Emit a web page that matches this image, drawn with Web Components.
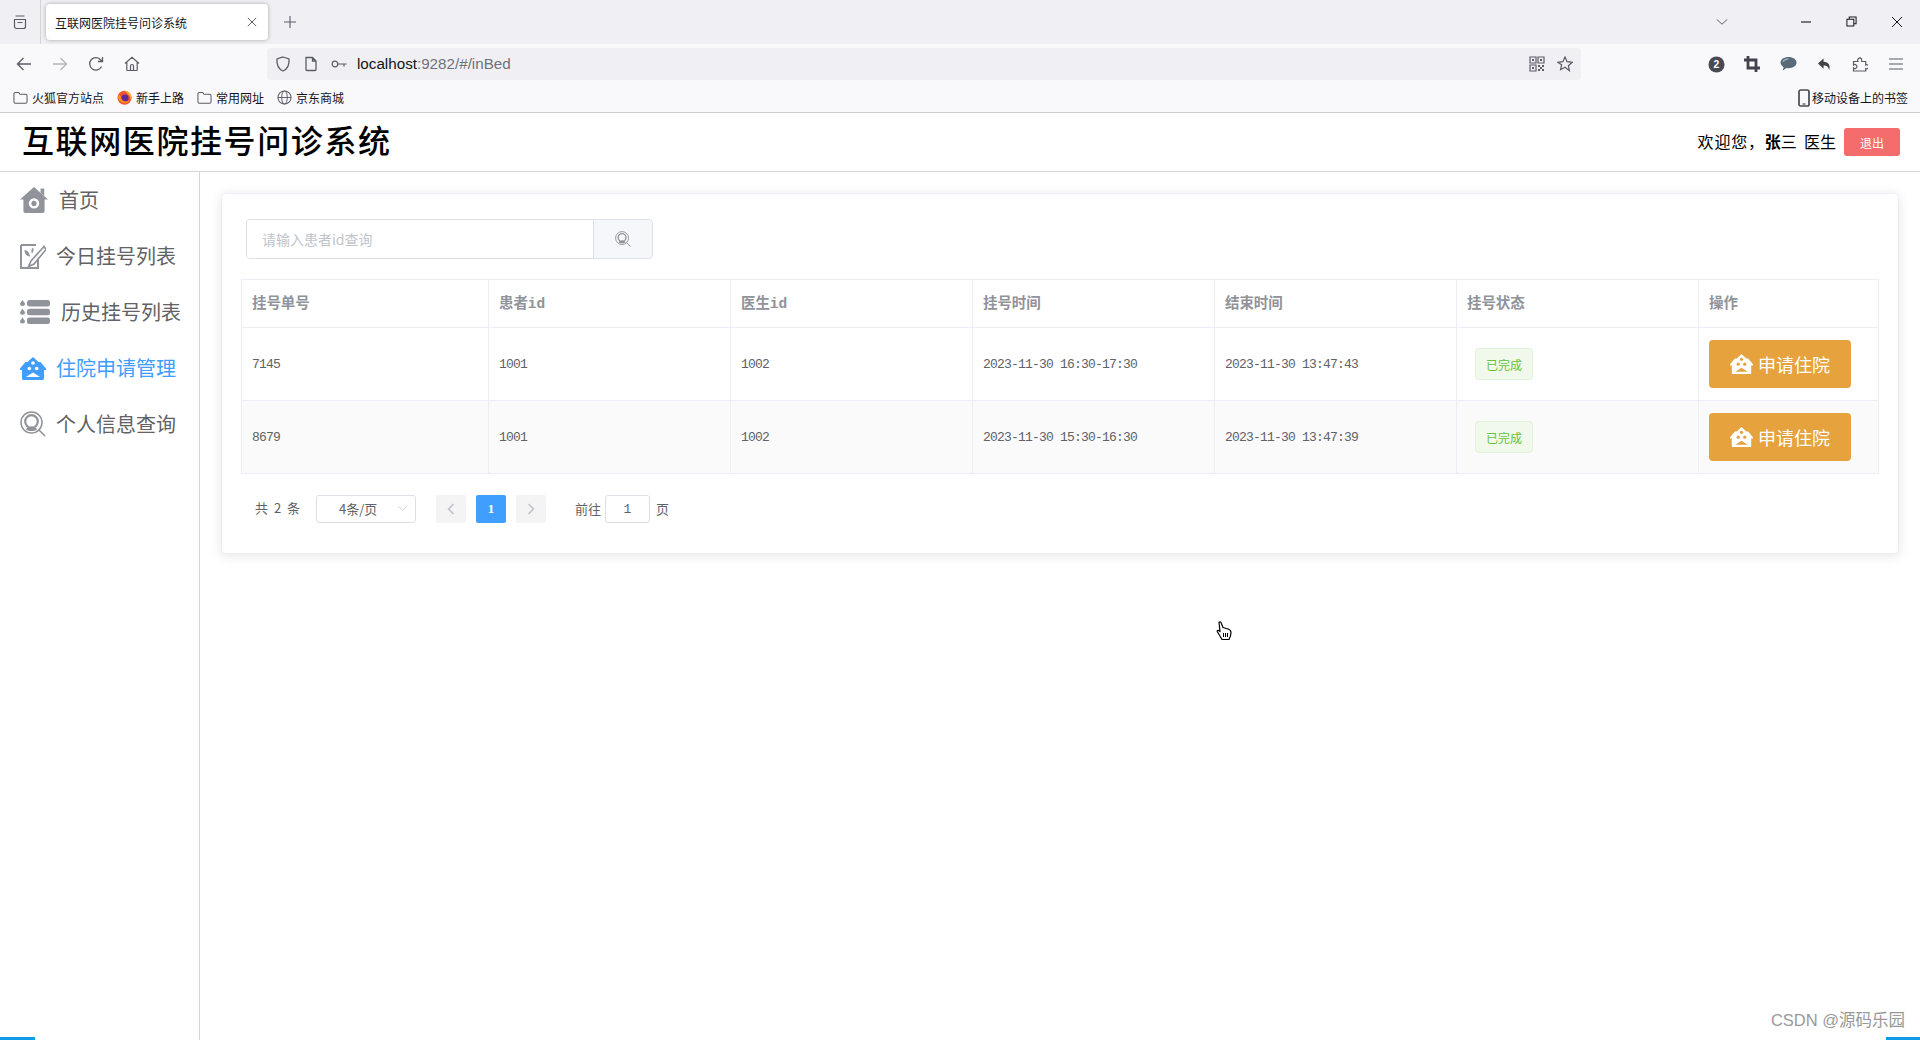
<!DOCTYPE html>
<html lang="zh">
<head>
<meta charset="utf-8">
<title>互联网医院挂号问诊系统</title>
<style>
  html, body { margin: 0; height: 100%; background: #fff; }
  body { font-family: "Noto Sans CJK SC", sans-serif; overflow: hidden; }
  #page { display: flex; flex-direction: column; height: 1040px; position: relative; }
  #main { display: flex; flex: 1; min-height: 0; }
</style>
</head>
<body>
<div id="page">
  <browser-frame url-host="localhost" url-rest=":9282/#/inBed" tab-title="互联网医院挂号问诊系统"></browser-frame>
  <app-header title-text="互联网医院挂号问诊系统"></app-header>
  <div id="main">
    <side-menu>
      <menu-item icon="home" gap="11">首页</menu-item>
      <menu-item icon="note" gap="10">今日挂号列表</menu-item>
      <menu-item icon="list" gap="11">历史挂号列表</menu-item>
      <menu-item icon="bed" gap="10" active>住院申请管理</menu-item>
      <menu-item icon="search" gap="10">个人信息查询</menu-item>
    </side-menu>
    <content-area>
      <panel-card>
        <search-box placeholder="请输入患者id查询"></search-box>
        <register-table></register-table>
        <page-bar></page-bar>
      </panel-card>
    </content-area>
  </div>
  <screen-overlay></screen-overlay>
</div>

<script>
const ICONS = {
  home: ['0 0 28 26', `<path d="M14 0 28 12.6h-3.4V24a2 2 0 0 1-2 2H5.4a2 2 0 0 1-2-2V12.6H0L14 0Z"/><path d="M20.6 1.5h3.6v7.4l-3.6-3.2Z"/><circle cx="14" cy="16.4" r="5.2" fill="#fff"/><circle cx="14" cy="16.4" r="2.6"/>`],
  note: ['0 0 26 26', `<path d="M1 2h15M1 2v23h17V15" fill="none" stroke="currentColor" stroke-width="2"/><path d="M24 3.5 11 18l-2.5 5.5L14 21 26 6.5Z" fill="#fff" stroke="currentColor" stroke-width="1.7"/><path d="M4.5 7c3 .5 5 2.500 5.500 6.500-3.500-.5-5.500-2.500-5.500-6.500ZM13 4.500c1 2 .5 4-1 6-1-2-1-4 1-6Z"/>`],
  list: ['0 0 30 24', `<rect x="7" y="0" width="23" height="6.500" rx="2.500"/><rect x="7" y="8.700" width="23" height="6.500" rx="2.500"/><rect x="7" y="17.400" width="23" height="6.500" rx="2.500"/><path d="M2.500 0 5 3.500a2.500 2.500 0 1 1-5 0ZM2.500 8.700 5 12.200a2.500 2.500 0 1 1-5 0ZM2.500 17.400 5 20.900a2.500 2.500 0 1 1-5 0Z"/>`],
  bed: ['0 0 26 23', `<path d="M13 0 18.500 5H20.500L26 11.500V13H24V21.500a1.500 1.500 0 0 1-1.500 1.500H3.500A1.500 1.500 0 0 1 2 21.500V13H0V11.500L5.500 5H7.500Z"/><circle cx="13" cy="6" r="1.800" fill="var(--hole,#fff)"/><circle cx="9.300" cy="11.500" r="1.800" fill="var(--hole,#fff)"/><circle cx="16.700" cy="11.500" r="1.800" fill="var(--hole,#fff)"/><path d="M13 15.500 20 20H6Z" fill="var(--hole,#fff)"/>`],
  search: ['0 0 26 26', `<circle cx="11.500" cy="11.500" r="10.500" fill="none" stroke="currentColor" stroke-width="1.500"/><circle cx="11.500" cy="10.500" r="6.300" fill="none" stroke="currentColor" stroke-width="2.200"/><path d="M6 18.500c1-2.200 3-3 5.500-3s4.500.8 5.500 3c-3 2-8 2-11 0Z"/><path d="m18.500 18.500 6.500 6.500" stroke="currentColor" stroke-width="1.600" fill="none"/>`],
  tabs: ['0 0 16 16', `<path d="M2.500 5.500h11v7a2 2 0 0 1-2 2h-7a2 2 0 0 1-2-2ZM3.500 2h9M5.500 8.500h5" fill="none" stroke="currentColor" stroke-width="1.200"/>`],
  back: ['0 0 16 16', `<path d="M15 8H1.500M7.500 2 1.500 8l6 6" fill="none" stroke="currentColor" stroke-width="1.300"/>`],
  forward: ['0 0 16 16', `<path d="M1 8h13.500M8.500 2l6 6-6 6" fill="none" stroke="currentColor" stroke-width="1.300"/>`],
  reload: ['0 0 16 16', `<path d="M13.500 10.500A6.200 6.200 0 1 1 12.800 4l1 1.200M14.500 1v4.500H10" fill="none" stroke="currentColor" stroke-width="1.300"/>`],
  house: ['0 0 16 16', `<path d="M1 7.500 8 1.200l7 6.300M2.800 6v7.500a1 1 0 0 0 1 1h8.400a1 1 0 0 0 1-1V6M6.500 14.500V10a1.500 1.500 0 0 1 3 0v4.500" fill="none" stroke="currentColor" stroke-width="1.200"/>`],
  shield: ['0 0 16 16', `<path d="M8 1 14 3c.5 6-1.500 10-6 12C3.500 13 1.500 9 2 3Z" fill="none" stroke="currentColor" stroke-width="1.300"/>`],
  page: ['0 0 16 16', `<path d="M3 1.500h6.500l3.500 3.500v8.500a1 1 0 0 1-1 1H4a1 1 0 0 1-1-1ZM9.500 1.500V5H13" fill="none" stroke="currentColor" stroke-width="1.300"/>`],
  key: ['0 0 16 16', `<circle cx="4" cy="8" r="2.800" fill="none" stroke="currentColor" stroke-width="1.200"/><path d="M6.800 8H15.500M13 8v2.500" fill="none" stroke="currentColor" stroke-width="1.200"/>`],
  qr: ['0 0 16 16', `<path d="M1 1h6v6H1ZM9 1h6v6H9ZM1 9h6v6H1Z" fill="none" stroke="currentColor" stroke-width="1.200"/><path d="M3 3h2v2H3ZM11 3h2v2h-2ZM3 11h2v2H3ZM9 9h2v2H9ZM13 9h2v2h-2ZM11 11h2v2h-2ZM9 13h2v2H9ZM13 13h2v2h-2Z"/>`],
  star: ['0 0 16 16', `<path d="m8 1 2.100 4.700 5.100.6-3.800 3.400 1 5L8 11.300l-4.400 2.400 1-5L.8 6.300l5.100-.6Z" fill="none" stroke="currentColor" stroke-width="1.200"/>`],
  badge: ['0 0 18 18', `<circle cx="9" cy="9" r="8.500"/><text x="9" y="13" text-anchor="middle" font-size="11" font-weight="700" fill="#fff" font-family="Liberation Sans">2</text>`],
  crop: ['0 0 16 16', `<path d="M4 0v12h12M0 4h12v12" fill="none" stroke="currentColor" stroke-width="2.800"/>`],
  chat: ['0 0 18 16', `<path d="M9 1c4.700 0 8.500 2.500 8.500 6S13.700 13 9 13c-.8 0-1.500-.1-2.200-.2L3 15.500l.8-3.700C2 10.700.5 9 .5 7 .5 3.500 4.300 1 9 1Z"/><path d="M3 6c1.500-2 4-3 6-3" stroke="#9fb3c4" stroke-width="1.400" fill="none"/>`],
  undo: ['0 0 16 16', `<path d="M7 1.500 1 7l6 5.500V9c3 0 5 .7 6 5 1.500-5-.5-9-6-9Z"/>`],
  puzzle: ['0 0 16 16', `<path d="M1.500 5.500H6a2 2 0 1 1 3.500-2.500l.2 2.500h4v3.500a2 2 0 1 1 0 3.500v2.500H1.500V12a2 2 0 1 0 0-3Z" fill="none" stroke="currentColor" stroke-width="1.200"/>`],
  menu: ['0 0 16 16', `<path d="M1 3h14M1 8h14M1 13h14" fill="none" stroke="currentColor" stroke-width="1.200"/>`],
  chevron: ['0 0 16 16', `<path d="m2 5 6 5.500L14 5" fill="none" stroke="currentColor" stroke-width="1.100"/>`],
  minimize: ['0 0 12 12', `<path d="M1 6h10" stroke="currentColor" stroke-width="1.100"/>`],
  restore: ['0 0 12 12', `<path d="M1 3.500h7.500V11H1ZM3.500 3.500V1H11v7.500H8.500" fill="none" stroke="currentColor" stroke-width="1.100"/>`],
  close: ['0 0 12 12', `<path d="m1 1 10 10M11 1 1 11" stroke="currentColor" stroke-width="1"/>`],
  plus: ['0 0 12 12', `<path d="M6 0v12M0 6h12" stroke="currentColor" stroke-width="1.100"/>`],
  folder: ['0 0 16 14', `<path d="M1 3a1.500 1.500 0 0 1 1.500-1.500H6l1.500 2h6A1.500 1.500 0 0 1 15 5v6.500a1.500 1.500 0 0 1-1.500 1.500h-11A1.500 1.500 0 0 1 1 11.500Z" fill="none" stroke="currentColor" stroke-width="1.100"/>`],
  globe: ['0 0 16 16', `<circle cx="8" cy="8" r="7" fill="none" stroke="currentColor" stroke-width="1.100"/><ellipse cx="8" cy="8" rx="3" ry="7" fill="none" stroke="currentColor" stroke-width="1"/><path d="M1 8h14" stroke="currentColor"/>`],
  firefox: ['0 0 16 16', `<circle cx="8" cy="8.300" r="7.500" fill="#f0522f"/><path d="M8 .800c5 .5 7.500 4 7.500 7.500 0 1-.2 2-.6 2.800C14.500 6 11 3.500 8 .800Z" fill="#ffb52b"/><circle cx="8.500" cy="8.500" r="3.800" fill="#5b2a9e"/><path d="M.8 7c.8 5 4 7 7.200 7 3 0 5-1.500 6-4-1.500 2-4 2.500-6 2-2.500-.6-4-2.600-3.800-5L2.500 5Z" fill="#ff8a1f"/>`],
  phone: ['0 0 12 18', `<rect x="1" y="1" width="10" height="16" rx="1.800" fill="none" stroke="currentColor" stroke-width="1.700"/><path d="M4.500 15h3" stroke="currentColor" stroke-width="1.200"/>`],
  chevLeft: ['0 0 10 10', `<path d="M7 1 3 5l4 4" fill="none" stroke="currentColor" stroke-width="1.400"/>`],
  chevRight: ['0 0 10 10', `<path d="m3 1 4 4-4 4" fill="none" stroke="currentColor" stroke-width="1.400"/>`]
};

function iconSvg(name, size, color) {
  const [box, body] = ICONS[name];
  const [, , w, h] = box.split(' ').map(Number);
  const height = Math.round(size * h / w * 10) / 10;
  return `<svg xmlns="http://www.w3.org/2000/svg" viewBox="${box}" width="${size}" height="${height}" fill="${color}" style="color:${color};display:block;flex:none">${body}</svg>`;
}

class BrowserFrame extends HTMLElement {
  constructor() {
    super();
    this.attachShadow({ mode: 'open' });
  }
  connectedCallback() {
    const mark = n => iconSvg(n, 16, '#5b5b66');
    const btn = (n, s, c = '#5b5b66') => `<span class="btn">${iconSvg(n, s, c)}</span>`;
    this.shadowRoot.innerHTML = `
      <style>
        :host { display: block; font-family: "Noto Sans CJK SC", sans-serif; color: #15141a; flex: none; }
        .strip { height: 44px; background: #f0f0f4; display: flex; align-items: center; }
        .btn { width: 36px; display: flex; justify-content: center; align-items: center; flex: none; }
        .side { width: 41px; display: flex; justify-content: center; border-right: 1px solid #d4d4d8; height: 44px; align-items: center; box-sizing: border-box; margin-right: 5px; }
        .tab { width: 222px; height: 36px; background: #fff; border-radius: 4px; box-shadow: 0 0 4px rgba(0,0,0,.3); display: flex; align-items: center; padding: 0 11px 0 9px; box-sizing: border-box; font-size: 12px; justify-content: space-between; }
        .plus { margin-left: 16px; }
        .fill { flex: 1; }
        .winbtns { display: flex; gap: 34px; margin-right: 17px; }
        .chev { margin-right: 71px; }
        .nav { height: 40px; background: #f9f9fb; display: flex; align-items: center; padding-left: 6px; }
        .url { width: 1314px; height: 32px; margin-left: 117px; border-radius: 4px; background: #f0f0f4; display: flex; align-items: center; box-sizing: border-box; padding: 0 2px 0 2px; font-size: 15.2px; flex: none; }
        .url .ic { display: flex; width: 28px; justify-content: center; margin-right: 0; }
        .addr { margin-left: 4px; flex: 1; font-family: "Liberation Sans", sans-serif; color: #15141a; padding-bottom: 1px; }
        .addr span { color: #70707a; }
        .tools { display: flex; margin-left: 117px; }
        .marks { height: 27px; padding-bottom: 1px; background: #f9f9fb; display: flex; align-items: center; font-size: 12px; padding-left: 13px; border-bottom: 1px solid #ccc; }
        .mark { display: flex; align-items: center; gap: 4px; margin-right: 13px; letter-spacing: 0; }
        .fill2 { flex: 1; }
        .mobile { display: flex; align-items: center; gap: 2px; margin-right: 12px; }
      </style>
      <div class="strip">
        <div class="side">${iconSvg('tabs', 16, '#5b5b66')}</div>
        <div class="tab"><span>${this.getAttribute('tab-title')}</span>${iconSvg('close', 10, '#3b3b45')}</div>
        <div class="plus">${iconSvg('plus', 12, '#5b5b66')}</div>
        <div class="fill"></div>
        <div class="chev">${iconSvg('chevron', 14, '#5b5b66')}</div>
        <div class="winbtns">${iconSvg('minimize', 12, '#15141a')}${iconSvg('restore', 11, '#15141a')}${iconSvg('close', 12, '#15141a')}</div>
      </div>
      <div class="nav">
        ${btn('back', 16)}${btn('forward', 16, '#b4b4ba')}${btn('reload', 16)}${btn('house', 16)}
        <div class="url">
          <span class="ic">${mark('shield')}</span><span class="ic">${mark('page')}</span><span class="ic">${mark('key')}</span>
          <div class="addr">${this.getAttribute('url-host')}<span>${this.getAttribute('url-rest')}</span></div>
          <span class="ic">${mark('qr')}</span><span class="ic">${mark('star')}</span>
        </div>
        <div class="tools">${btn('badge', 17, '#4a4a55')}${btn('crop', 16, '#42424c')}${btn('chat', 17, '#5a6a78')}${btn('undo', 15, '#42424c')}${btn('puzzle', 16)}${btn('menu', 16)}</div>
      </div>
      <div class="marks">
        <span class="mark">${iconSvg('folder', 15, '#5b5b66')}火狐官方站点</span>
        <span class="mark">${iconSvg('firefox', 15, '#000')}新手上路</span>
        <span class="mark">${iconSvg('folder', 15, '#5b5b66')}常用网址</span>
        <span class="mark">${iconSvg('globe', 15, '#5b5b66')}京东商城</span>
        <span class="fill2"></span>
        <span class="mobile">${iconSvg('phone', 12, '#4a4a55')}移动设备上的书签</span>
      </div>`;
  }
}

class AppHeader extends HTMLElement {
  constructor() {
    super();
    this.attachShadow({ mode: 'open' });
  }
  connectedCallback() {
    this.shadowRoot.innerHTML = `
      <style>
        :host { display: flex; flex: none; height: 59px; box-sizing: border-box; border-bottom: 1px solid #d5d5d5; align-items: center; justify-content: space-between; padding: 0 20px 0 22px; font-family: "Noto Sans CJK SC", sans-serif; color: #000; }
        h1 { margin: 0 0 6px; font-size: 32px; letter-spacing: 1.6px; font-weight: 500; line-height: 1; }
        .user { display: flex; align-items: center; font-size: 16px; }
        .who { margin-right: 8px; white-space: pre; padding-bottom: 3px; }
        .hi { letter-spacing: .8px; }
        button { width: 56px; height: 28px; border: 0; border-radius: 3px; background: #f56c6c; color: #fff; font: 12px "Noto Sans CJK SC", sans-serif; padding: 0; }
      </style>
      <h1>${this.getAttribute('title-text')}</h1>
      <div class="user"><span class="who"><span class="hi">欢迎您，</span><b>张</b>三  医生</span><button>退出</button></div>`;
  }
}

class SideMenu extends HTMLElement {
  constructor() {
    super();
    this.attachShadow({ mode: 'open' }).innerHTML = `
      <style>
        :host { display: flex; flex-direction: column; width: 200px; flex: none; box-sizing: border-box; border-right: 1px solid #d5d5d5; }
      </style>
      <slot></slot>`;
  }
}

class MenuItem extends HTMLElement {
  constructor() {
    super();
    this.attachShadow({ mode: 'open' });
  }
  connectedCallback() {
    const active = this.hasAttribute('active');
    const color = active ? '#409eff' : '#909399';
    const width = { home: 28, note: 26, list: 30, bed: 26, search: 26 }[this.getAttribute('icon')];
    this.shadowRoot.innerHTML = `
      <style>
        :host { display: flex; height: 56px; align-items: center; padding-left: 20px; flex: none; font-size: 20px; color: ${active ? '#409eff' : '#606266'}; --hole: #fff; }
        .icon { margin-right: ${this.getAttribute('gap')}px; }
        .label { padding-bottom: 1px; }
      </style>
      <span class="icon">${iconSvg(this.getAttribute('icon'), width, color)}</span><span class="label"><slot></slot></span>`;
  }
}

class ContentArea extends HTMLElement {
  constructor() {
    super();
    this.attachShadow({ mode: 'open' }).innerHTML = `
      <style>
        :host { display: block; flex: 1; min-width: 0; padding: 21px 21px 0 21px; }
      </style>
      <slot></slot>`;
  }
}

class PanelCard extends HTMLElement {
  constructor() {
    super();
    this.attachShadow({ mode: 'open' }).innerHTML = `
      <style>
        :host { display: block; box-sizing: border-box; height: 361px; padding: 25px 19px 0; border: 1px solid #ebeef5; border-radius: 4px; box-shadow: 0 2px 12px rgba(0,0,0,.1); background: #fff; }
      </style>
      <slot></slot>`;
  }
}

class SearchBox extends HTMLElement {
  constructor() {
    super();
    this.attachShadow({ mode: 'open' });
  }
  connectedCallback() {
    this.shadowRoot.innerHTML = `
      <style>
        :host { display: flex; width: 407px; height: 40px; margin-left: 5px; box-sizing: border-box; border: 1px solid #dcdfe6; border-radius: 4px; overflow: hidden; }
        input { flex: 1; min-width: 0; border: 0; outline: 0; padding: 0 15px; font: 14px "Noto Sans CJK SC", sans-serif; color: #606266; }
        input::placeholder { color: #c0c4cc; opacity: 1; }
        .go { width: 58px; flex: none; background: #f5f7fa; border-left: 1px solid #dcdfe6; display: flex; align-items: center; justify-content: center; }
      </style>
      <input placeholder="${this.getAttribute('placeholder')}">
      <div class="go">${iconSvg('search', 16, '#909399')}</div>`;
  }
}

class StatusTag extends HTMLElement {
  constructor() {
    super();
    this.attachShadow({ mode: 'open' }).innerHTML = `
      <style>
        :host { display: flex; align-items: center; justify-content: center; width: 58px; height: 32px; box-sizing: border-box; border: 1px solid #e1f3d8; border-radius: 4px; background: #f0f9eb; color: #67c23a; font: 12px "Noto Sans CJK SC", sans-serif; letter-spacing: 0; margin-left: 8px; }
      </style>
      <slot></slot>`;
  }
}

class ApplyButton extends HTMLElement {
  constructor() {
    super();
    this.attachShadow({ mode: 'open' }).innerHTML = `
      <style>
        :host { display: flex; align-items: center; justify-content: center; gap: 5px; width: 142px; height: 48px; background: #e6a23c; color: #fff; border-radius: 4px; font: 18px "Noto Sans CJK SC", sans-serif; letter-spacing: 0; --hole: #e6a23c; }
      </style>
      ${iconSvg('bed', 23, '#fff')}<slot></slot>`;
  }
}

class RegisterTable extends HTMLElement {
  constructor() {
    super();
    this.attachShadow({ mode: 'open' });
    this.rows = [
      ['7145', '1001', '1002', '2023-11-30 16:30-17:30', '2023-11-30 13:47:43'],
      ['8679', '1001', '1002', '2023-11-30 15:30-16:30', '2023-11-30 13:47:39']
    ];
  }
  connectedCallback() {
    const heads = ['挂号单号', '患者id', '医生id', '挂号时间', '结束时间', '挂号状态', '操作'];
    const body = this.rows.map(r => `
      <tr>${r.map(v => `<td>${v}</td>`).join('')}
        <td><status-tag>已完成</status-tag></td>
        <td><apply-button>申请住院</apply-button></td>
      </tr>`).join('');
    this.shadowRoot.innerHTML = `
      <style>
        :host { display: block; margin-top: 20px; }
        table { width: 1637px; table-layout: fixed; border-collapse: collapse; font-family: "Liberation Mono", "Noto Sans CJK SC", monospace; }
        th, td { border: 1px solid #ebeef5; padding: 0 0 0 10px; text-align: left; }
        th { height: 48px; padding-bottom: 4px; box-sizing: border-box; font-size: 14.5px; color: #909399; font-weight: 700; letter-spacing: -.1px; }
        td { height: 72px; font-size: 13px; color: #606266; letter-spacing: -.8px; }
        tr:nth-child(2) td { background: #fafafa; }
      </style>
      <table>
        <colgroup><col style="width:247px"><col style="width:242px"><col style="width:242px"><col style="width:242px"><col style="width:242px"><col style="width:242px"><col style="width:180px"></colgroup>
        <thead><tr>${heads.map(h => `<th>${h}</th>`).join('')}</tr></thead>
        <tbody>${body}</tbody>
      </table>`;
  }
}

class PageBar extends HTMLElement {
  constructor() {
    super();
    this.attachShadow({ mode: 'open' });
  }
  connectedCallback() {
    this.shadowRoot.innerHTML = `
      <style>
        :host { display: flex; align-items: center; height: 28px; margin-top: 21px; padding-left: 14px; font: 13px "Noto Sans CJK SC", sans-serif; color: #606266; }
        .total { width: 61px; word-spacing: 3px; white-space: pre; padding-bottom: 3px; }
        .size { width: 100px; height: 28px; box-sizing: border-box; border: 1px solid #dcdfe6; border-radius: 3px; display: flex; align-items: center; padding: 0 7px 1px 22px; justify-content: space-between; font-size: 13px; margin-right: 20px; }
        .pg { width: 30px; height: 28px; border-radius: 2px; background: #f4f4f5; color: #c0c4cc; display: flex; align-items: center; justify-content: center; margin-right: 10px; }
        .pg.on { background: #409eff; color: #fff; font: 700 13px "Liberation Serif", serif; }
        .jump { margin-left: 19px; padding-bottom: 1px; }
        .tail { padding-bottom: 1px; }
        .num { width: 45px; height: 28px; box-sizing: border-box; border: 1px solid #dcdfe6; border-radius: 3px; display: flex; align-items: center; justify-content: center; margin: 0 6px 0 4px; font-family: "Liberation Mono", monospace; }
      </style>
      <span class="total">共 2 条</span>
      <div class="size"><span>4条/页</span>${iconSvg('chevron', 11, '#c0c4cc')}</div>
      <div class="pg">${iconSvg('chevLeft', 12, '#c0c4cc')}</div>
      <div class="pg on">1</div>
      <div class="pg">${iconSvg('chevRight', 12, '#c0c4cc')}</div>
      <span class="jump">前往</span>
      <div class="num">1</div>
      <span class="tail">页</span>`;
  }
}

class ScreenOverlay extends HTMLElement {
  constructor() {
    super();
    this.attachShadow({ mode: 'open' }).innerHTML = `
      <style>
        :host { display: block; }
        .mark { position: absolute; right: 15px; bottom: 8px; font: 16.5px "Liberation Sans", "Noto Sans CJK SC", sans-serif; color: #999; line-height: 24px; }
        .bar { position: absolute; bottom: 0; height: 3px; background: #0f9be8; }
        .cursor { position: absolute; left: 1216px; top: 621px; }
      </style>
      <div class="mark">CSDN @源码乐园</div>
      <div class="bar" style="left:0;width:35px"></div>
      <div class="bar" style="right:0;width:34px"></div>
      <svg class="cursor" width="16" height="20" viewBox="0 0 16 20"><path d="M3 1.200c1-.8 2 0 2.300 1L7 6.500l5 1.500c2 .6 3 1.500 3 3.500 0 3-1 5-2 7H6L1.500 11C.8 10 1.500 9 2.800 9.500L4 10.500Z" fill="#fff" stroke="#000" stroke-width="1.200" stroke-linejoin="round"/><path d="M7.500 12v4M9.500 12v4M11.500 12v4" stroke="#000" stroke-width="1"/></svg>`;
  }
}

customElements.define('browser-frame', BrowserFrame);
customElements.define('app-header', AppHeader);
customElements.define('side-menu', SideMenu);
customElements.define('menu-item', MenuItem);
customElements.define('content-area', ContentArea);
customElements.define('panel-card', PanelCard);
customElements.define('search-box', SearchBox);
customElements.define('status-tag', StatusTag);
customElements.define('apply-button', ApplyButton);
customElements.define('register-table', RegisterTable);
customElements.define('page-bar', PageBar);
customElements.define('screen-overlay', ScreenOverlay);
</script>
</body>
</html>
